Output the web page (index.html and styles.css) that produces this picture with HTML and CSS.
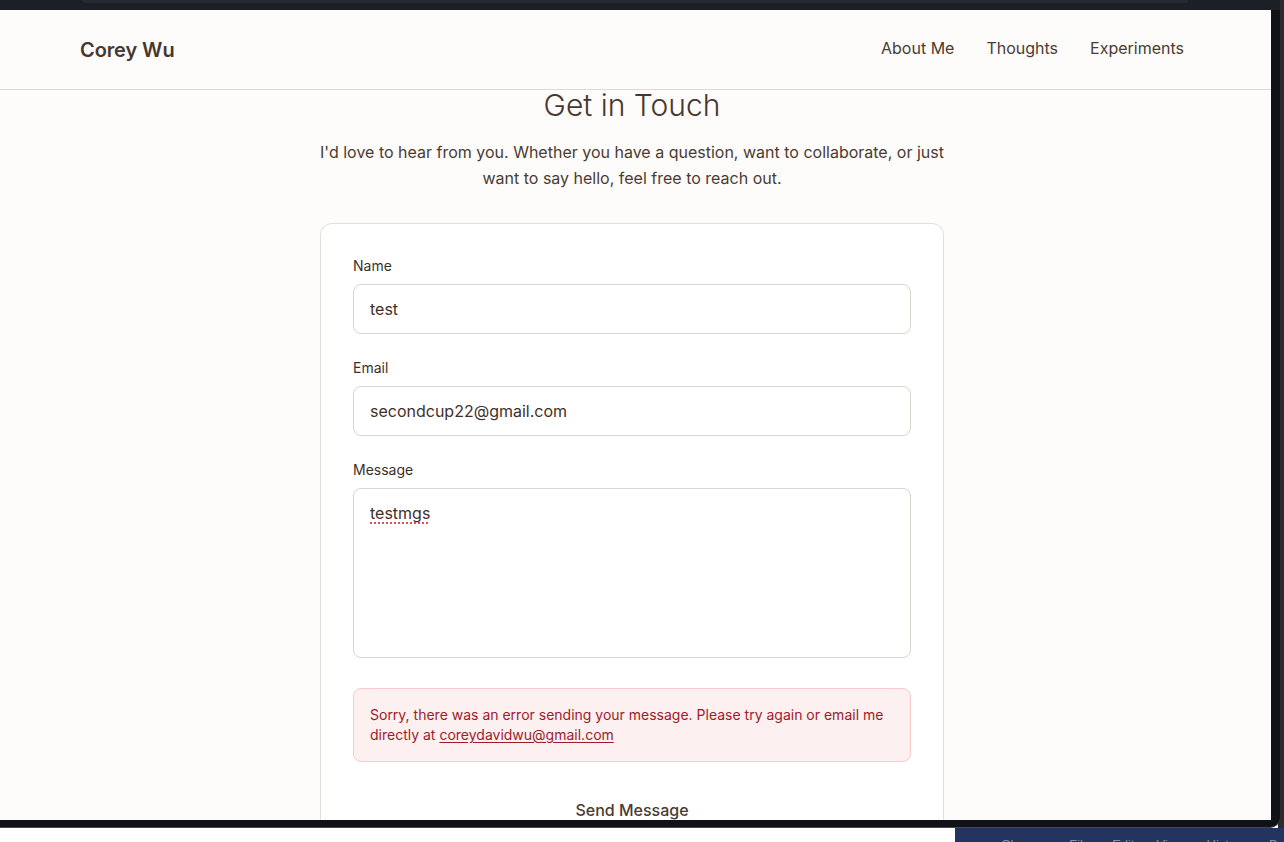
FILE: index.html
```html
<!DOCTYPE html>
<html lang="en">
<head>
<meta charset="utf-8">
<title>Contact - Corey Wu</title>
<link rel="stylesheet" href="styles.css">
</head>
<body>
<div class="screen">
  <div class="window">
    <div class="chrome-top"><div class="chrome-tab"></div></div>
    <div class="viewport">
      <div class="page">
        <header class="site-header">
          <a class="brand" href="#">Corey Wu</a>
          <nav class="nav">
            <a href="#">About Me</a>
            <a href="#">Thoughts</a>
            <a href="#">Experiments</a>
          </nav>
        </header>
        <main class="contact">
          <h1 class="title">Get in Touch</h1>
          <p class="intro">I'd love to hear from you. Whether you have a question, want to collaborate, or just want to say hello, feel free to reach out.</p>
          <form class="card">
            <div class="field">
              <label class="label">Name</label>
              <div class="input">test</div>
            </div>
            <div class="field">
              <label class="label">Email</label>
              <div class="input">secondcup22@gmail.com</div>
            </div>
            <div class="field field-message">
              <label class="label">Message</label>
              <div class="input textarea"><span class="misspelled">testmgs</span></div>
            </div>
            <div class="error">Sorry, there was an error sending your message. Please try again or email me directly at <a href="#">coreydavidwu@gmail.com</a></div>
            <button class="send" type="button">Send Message</button>
          </form>
        </main>
      </div>
    </div>
  </div>
  <div class="menubar"><span class="apple"></span><span>Chrome</span><span>File</span><span>Edit</span><span>View</span><span>History</span><span>Bookmarks</span></div>
</div>
</body>
</html>
```

FILE: styles.css
```css
* { box-sizing: border-box; }
html, body { margin: 0; padding: 0; }
body {
  background: #ffffff;
  font-family: Inter, "Liberation Sans", sans-serif;
  overflow: hidden;
}
.screen {
  position: relative;
  width: 1284px;
  height: 842px;
  background: linear-gradient(to right, #ffffff 1278px, #2b2b2d 1278px);
  overflow: hidden;
}
.window {
  width: 1280px;
  height: 828px;
  background: #111217;
  border-bottom: 1px solid #46474b;
  border-bottom-right-radius: 10px;
  display: flex;
  flex-direction: column;
}
.chrome-top {
  height: 10px;
  background: #1d1f27;
  padding-left: 82px;
  flex: none;
}
.chrome-tab {
  width: 1106px;
  height: 3px;
  background: #272a35;
  border-bottom-right-radius: 4px;
  border-bottom-left-radius: 4px;
}
.viewport {
  width: 1271px;
  height: 810px;
  background: #fdfcfa;
  overflow: hidden;
  flex: none;
}
.page {
  width: 1271px;
  padding-right: 7px;
}
.site-header {
  height: 80px;
  width: 1271px;
  border-bottom: 1px solid #dedad5;
  display: flex;
  align-items: center;
  justify-content: space-between;
  padding: 0 87px 0 80px;
}
.brand {
  font-size: 20px;
  font-weight: 600;
  color: #47372e;
  text-decoration: none;
  letter-spacing: -0.1px;
}
.nav {
  display: flex;
  gap: 32px;
  margin-top: -3px;
}
.nav a {
  font-size: 16px;
  color: #4a3b33;
  text-decoration: none;
}
.contact {
  width: 624px;
  margin: 0 auto;
  display: flex;
  flex-direction: column;
  align-items: stretch;
}
.title {
  margin: 0;
  font-size: 30px;
  line-height: 30px;
  font-weight: 300;
  color: #47372e;
  text-align: center;
}
.intro {
  margin: 19px 0 0;
  font-size: 16px;
  line-height: 26px;
  color: #4a3b33;
  text-align: center;
}
.card {
  margin-top: 32px;
  background: #ffffff;
  border: 1px solid #e2ded8;
  border-radius: 12px;
  padding: 32px;
  display: flex;
  flex-direction: column;
  gap: 24px;
  height: 700px;
}
.field {
  display: flex;
  flex-direction: column;
  gap: 8px;
}
.field-message { margin-bottom: 6px; }
.label {
  font-size: 14px;
  line-height: 20px;
  font-weight: 400;
  color: #3d2f28;
}
.input {
  border: 1px solid #d9d5cf;
  border-radius: 8px;
  background: #ffffff;
  padding: 12px 16px;
  font-size: 16px;
  line-height: 24px;
  color: #3f3029;
}
.textarea { height: 170px; }
.misspelled {
  text-decoration: underline dotted #e0525a;
  text-decoration-thickness: 2px;
  text-underline-offset: 3px;
}
.error {
  background: #fdf0f0;
  border: 1px solid #f9c9cb;
  border-radius: 8px;
  padding: 16px;
  font-size: 14px;
  line-height: 20px;
  color: #9d1b2b;
}
.error a {
  color: #9d1b2b;
  text-decoration: underline;
  text-underline-offset: 2px;
}
.send {
  background: transparent;
  border: none;
  padding: 12px;
  font-family: inherit;
  font-size: 16px;
  line-height: 24px;
  font-weight: 500;
  color: #4a3b33;
}
.menubar {
  position: absolute;
  left: 955px;
  top: 828px;
  width: 329px;
  height: 14px;
  background: #23345e;
  display: flex;
  gap: 22px;
  padding-left: 24px;
  padding-top: 10px;
  font-family: "Liberation Sans", sans-serif;
  font-size: 13px;
  line-height: 14px;
  color: #8391b2;
  overflow: hidden;
  white-space: nowrap;
}
.apple {
  width: 8px;
  height: 6px;
  background: #8391b2;
  border-radius: 4px 4px 0 0;
}
```
